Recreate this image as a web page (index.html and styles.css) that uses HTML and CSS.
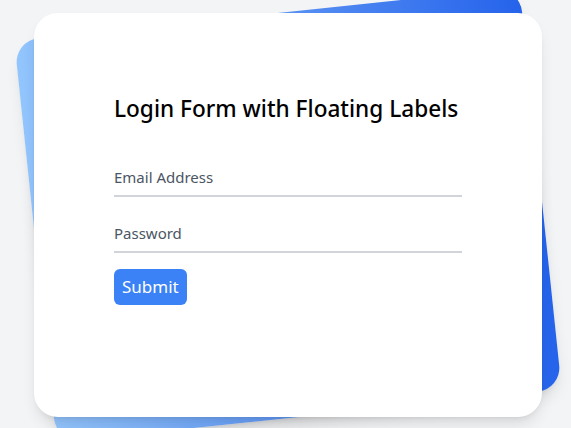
FILE: index.html
```
<!DOCTYPE html>
<html lang="en">
<head>
<meta charset="utf-8">
<title>Login Form with Floating Labels</title>
<link rel="stylesheet" href="styles.css">
</head>
<body>
  <div class="page">
    <div class="stack">
      <div class="backdrop"></div>
      <div class="card">
        <div class="inner">
          <div class="head">
            <h1 class="title">Login Form with Floating Labels</h1>
          </div>
          <div class="form">
            <div class="field">
              <input class="input" id="email" type="text" placeholder="Email address">
              <label class="label" for="email">Email Address</label>
            </div>
            <div class="field">
              <input class="input" id="password" type="password" placeholder="Password">
              <label class="label" for="password">Password</label>
            </div>
            <div class="actions">
              <button class="btn" type="button">Submit</button>
            </div>
          </div>
        </div>
      </div>
    </div>
  </div>
</body>
</html>
```

FILE: styles.css
```
* { box-sizing: border-box; }
html, body { margin: 0; padding: 0; }
body {
  background: #f3f4f6;
  font-family: "Noto Sans", "Open Sans", sans-serif;
  height: 428px;
  overflow: hidden;
}
.page {
  padding-top: 13px;
  padding-left: 34px;
}
.stack {
  position: relative;
  width: 508px;
}
.backdrop {
  position: absolute;
  inset: 0;
  border-radius: 24px;
  background: linear-gradient(to right, #93c5fd, #2563eb);
  transform: rotate(-6deg);
  box-shadow: 0 10px 15px -3px rgba(0,0,0,0.1), 0 4px 6px -4px rgba(0,0,0,0.1);
}
.card {
  position: relative;
  background: #fff;
  border-radius: 24px;
  padding: 80px;
  box-shadow: 0 10px 15px -3px rgba(0,0,0,0.1), 0 4px 6px -4px rgba(0,0,0,0.1);
}
.title {
  margin: 0;
  font-size: 22.6px;
  line-height: 32px;
  font-weight: 500;
  color: #000;
}
.form {
  padding: 32px 0;
  display: flex;
  flex-direction: column;
  gap: 16px;
  color: #374151;
}
.field {
  position: relative;
}
.input {
  display: block;
  width: 100%;
  height: 40px;
  border: 0;
  border-bottom: 2px solid #d1d5db;
  background: transparent;
  outline: none;
  padding: 0;
  font: inherit;
  color: #111827;
}
.input::placeholder { color: transparent; }
.label {
  position: absolute;
  left: 0;
  top: 8px;
  font-size: 15px;
  line-height: 24px;
  color: #4b5563;
}
.actions { display: flex; }
.btn {
  background: #3b82f6;
  color: #fff;
  border: 0;
  border-radius: 6px;
  padding: 4px 8px;
  font-family: inherit;
  font-size: 17px;
  line-height: 28px;
}
```
